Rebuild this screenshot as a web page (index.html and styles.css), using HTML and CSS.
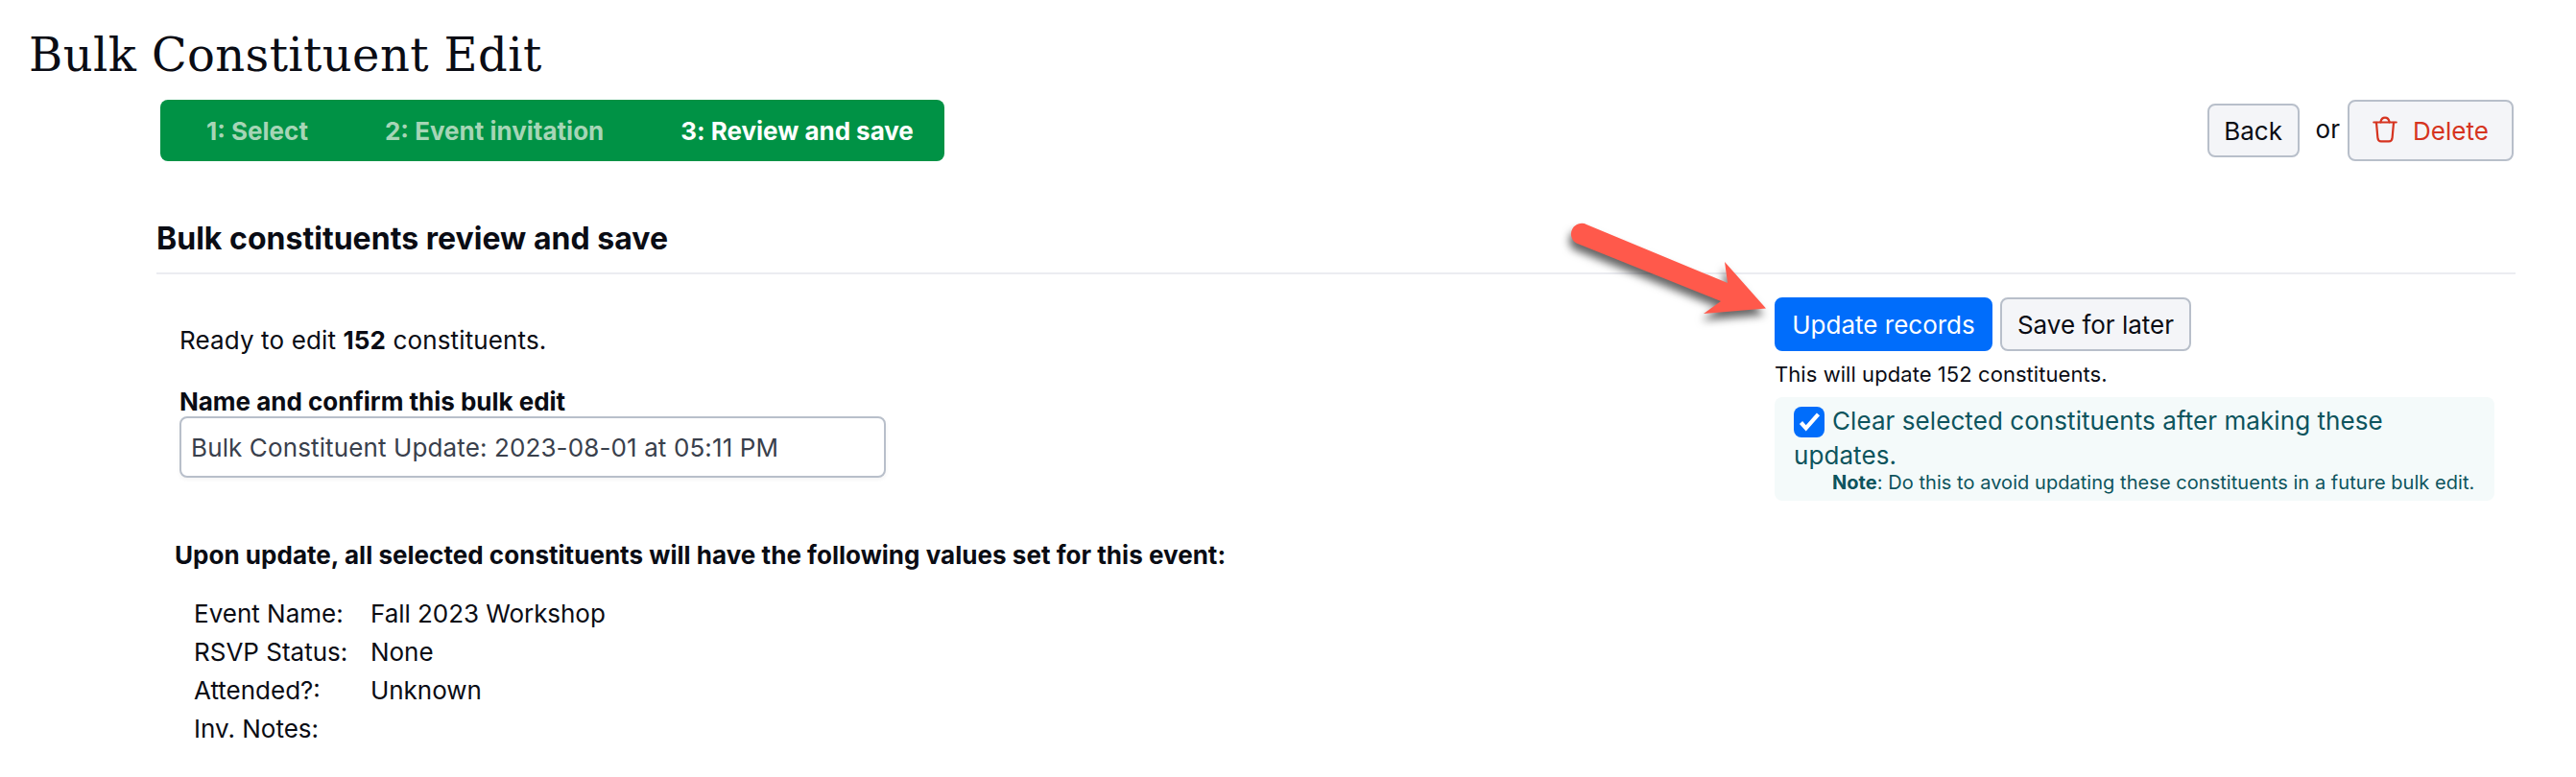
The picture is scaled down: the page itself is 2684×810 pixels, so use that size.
FILE: index.html
```
<!DOCTYPE html>
<html lang="en">
<head>
    <meta charset="UTF-8">
    <meta name="viewport" content="width=device-width, initial-scale=1.0">
    <title>Bulk Constituent Edit</title>
    <link rel="stylesheet" href="styles.css">
</head>
<body>

<h1 class="page-title">Bulk Constituent Edit</h1>

<div class="toolbar">
    <div class="steps">
        <span class="step">1: Select</span>
        <span class="step">2: Event invitation</span>
        <span class="step current">3: Review and save</span>
    </div>
    <div class="actions">
        <button class="btn btn-back">Back</button>
        <span class="or">or</span>
        <button class="btn btn-delete">
            <svg class="trash" width="26" height="28" viewBox="0 0 26 28" fill="none" stroke="currentColor" stroke-width="2.2" stroke-linecap="round" stroke-linejoin="round">
                <path d="M1.3 6.5H24.7"/>
                <path d="M8.4 6.3C9 3.4 10.6 1.7 13 1.7S17 3.4 17.6 6.3"/>
                <path d="M4 6.8L5.4 22.6C5.7 25.4 6.8 26.3 9 26.3H17C19.2 26.3 20.3 25.4 20.6 22.6L22 6.8"/>
            </svg>
            <span>Delete</span>
        </button>
    </div>
</div>

<h2 class="section-title">Bulk constituents review and save</h2>

<div class="content">
    <div class="main">
        <p class="ready">Ready to edit <b>152</b> constituents.</p>
        <label class="name-label" for="edit-name">Name and confirm this bulk edit</label>
        <input class="name-input" id="edit-name" type="text" value="Bulk Constituent Update: 2023-08-01 at 05:11 PM">

        <h3 class="values-title">Upon update, all selected constituents will have the following values set for this event:</h3>
        <dl class="values">
            <dt>Event Name:</dt><dd>Fall 2023 Workshop</dd>
            <dt>RSVP Status:</dt><dd>None</dd>
            <dt>Attended?:</dt><dd>Unknown</dd>
            <dt>Inv. Notes:</dt><dd></dd>
        </dl>
    </div>

    <div class="side">
        <div class="side-buttons">
            <button class="btn btn-primary">Update records</button>
            <button class="btn btn-save">Save for later</button>
        </div>
        <p class="hint">This will update 152 constituents.</p>
        <div class="clear-box">
            <label class="clear-label"><span class="check"><svg width="32" height="32" viewBox="0 0 32 32"><path d="M7.5 16.5L12.7 22.3L25.5 7.8" fill="none" stroke="#fff" stroke-width="4.2"/></svg></span>Clear selected constituents after making these updates.</label>
            <p class="note"><b>Note</b>: Do this to avoid updating these constituents in a future bulk edit.</p>
        </div>
    </div>
</div>

<!-- arrow pointing at the update button -->
<svg class="arrow" width="240" height="130" viewBox="0 0 240 130">
    <path d="M33.5 14.3L180 75L177 53L220 101.6L155 107L173 94L22.5 33.5A10.4 10.4 0 0 1 33.5 14.3Z" fill="#ff594b"/>
</svg>

</body>
</html>
```
FILE: styles.css
```
* {
    box-sizing: border-box;
}
body {
    margin: 0;
    height: 810px;
    overflow: hidden;
    position: relative;
    background: #fff;
    color: #0a0c14;
    font-family: Inter, sans-serif;
    font-size: 26px;
    line-height: 32px;
}
p, h1, h2, h3, dl, dd {
    margin: 0;
}
.page-title {
    padding: 25px 0 0 30px;
    font-family: "DejaVu Serif", serif;
    font-size: 48px;
    line-height: 64px;
    font-weight: 400;
    letter-spacing: 0.4px;
}
.toolbar {
    display: flex;
    justify-content: space-between;
    margin: 15px 65px 0 167px;
    height: 64px;
}
.steps {
    display: flex;
    align-items: center;
    gap: 80px;
    padding: 2px 32px 0 48px;
    border-radius: 8px;
    background: #009245;
    font-weight: 700;
}
.step {
    color: #a6d5b6;
}
.current {
    color: #fff;
    letter-spacing: -0.03px;
}
.actions {
    display: flex;
    align-items: center;
}
.btn {
    height: 56px;
    padding: 2px 0 0;
    border: 2px solid #b8bfca;
    border-radius: 8px;
    background: #f4f5f8;
    color: #0a0c14;
    font: inherit;
    white-space: nowrap;
}
.btn-back {
    width: 96px;
}
.or {
    margin: 0 8px 0 17px;
    padding-bottom: 2px;
}
.btn-delete {
    display: flex;
    align-items: center;
    gap: 16px;
    width: 173px;
    height: 64px;
    padding: 2px 0 0 24px;
    color: #d63420;
}
.trash {
    margin-bottom: 5px;
}
.section-title {
    margin: 61px 63px 0 163px;
    padding-bottom: 15px;
    border-bottom: 2px solid #ebecf1;
    font-size: 32px;
    line-height: 40px;
    font-weight: 700;
    letter-spacing: 0.03px;
}
.content {
    display: flex;
    justify-content: space-between;
    padding: 0 85px 0 187px;
}
.main {
    padding-top: 53px;
}
.ready {
    letter-spacing: 0.13px;
}
.name-label {
    display: block;
    margin: 32px 0 -1px;
    font-weight: 700;
    letter-spacing: -0.02px;
}
.name-input {
    display: block;
    width: 736px;
    height: 64px;
    padding: 0 10px;
    border: 2px solid #b8bfca;
    border-radius: 8px;
    background: #fff;
    box-shadow: 0 2px 4px rgba(0, 0, 0, 0.05);
    color: #39404c;
    font: inherit;
    letter-spacing: 0.12px;
}
.values-title {
    margin: 65px 0 0 -5px;
    font-size: 26px;
    font-weight: 700;
    letter-spacing: 0.03px;
}
.values {
    display: grid;
    grid-template-columns: 184px auto;
    margin: 25px 0 0 15px;
    line-height: 40px;
}
.values dd {
    letter-spacing: -0.05px;
}
.side {
    width: 750px;
    padding-top: 24px;
}
.side-buttons {
    display: flex;
    gap: 8px;
}
.btn-primary {
    width: 227px;
    border-color: #006dfb;
    background: #006dfb;
    color: #fff;
}
.btn-save {
    width: 199px;
}
.hint {
    margin-top: 8px;
    font-size: 22px;
    letter-spacing: 0.06px;
}
.clear-box {
    height: 108px;
    margin-top: 8px;
    padding: 7px 20px 0;
    border-radius: 8px;
    background: #f4fafa;
    color: #0d545d;
}
.clear-label {
    display: block;
    line-height: 36px;
    letter-spacing: 0.07px;
}
.check {
    display: inline-block;
    width: 32px;
    height: 32px;
    margin: 3px 8px -3px 0;
    border-radius: 8px;
    background: #006dfb;
    vertical-align: top;
}
.check svg {
    display: block;
}
.note {
    margin-top: -2px;
    padding-left: 40px;
    font-size: 20px;
    line-height: 24px;
    letter-spacing: 0.05px;
    white-space: nowrap;
}
.arrow {
    position: absolute;
    left: 1620px;
    top: 220px;
    filter: drop-shadow(-2px 7px 4px rgba(0, 0, 0, 0.6));
}
```
